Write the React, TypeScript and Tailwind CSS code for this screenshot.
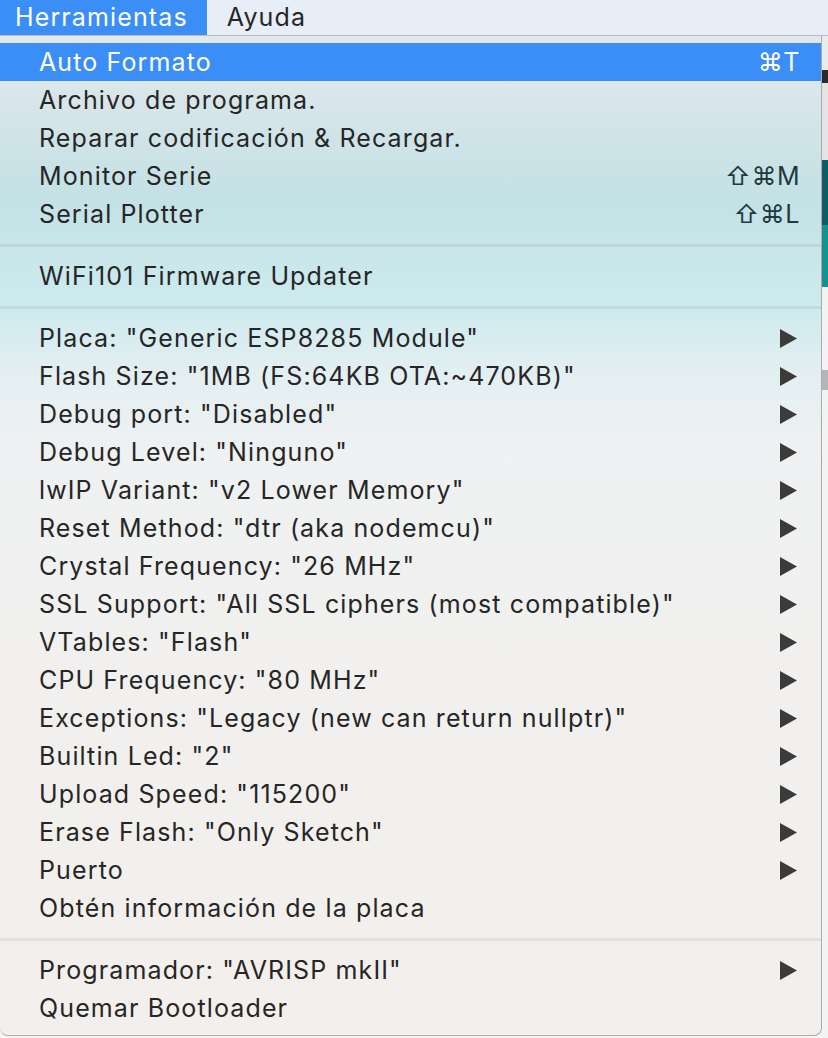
import { ReactNode } from "react"

type Item =
  | { kind: "item"; label: string; shortcut?: string; submenu?: boolean; active?: boolean }
  | { kind: "sep" }

const items: Item[] = [
  { kind: "item", label: "Auto Formato", shortcut: "⌘T", active: true },
  { kind: "item", label: "Archivo de programa." },
  { kind: "item", label: "Reparar codificación & Recargar." },
  { kind: "item", label: "Monitor Serie", shortcut: "⇧⌘M" },
  { kind: "item", label: "Serial Plotter", shortcut: "⇧⌘L" },
  { kind: "sep" },
  { kind: "item", label: "WiFi101 Firmware Updater" },
  { kind: "sep" },
  { kind: "item", label: 'Placa: "Generic ESP8285 Module"', submenu: true },
  { kind: "item", label: 'Flash Size: "1MB (FS:64KB OTA:~470KB)"', submenu: true },
  { kind: "item", label: 'Debug port: "Disabled"', submenu: true },
  { kind: "item", label: 'Debug Level: "Ninguno"', submenu: true },
  { kind: "item", label: 'lwIP Variant: "v2 Lower Memory"', submenu: true },
  { kind: "item", label: 'Reset Method: "dtr (aka nodemcu)"', submenu: true },
  { kind: "item", label: 'Crystal Frequency: "26 MHz"', submenu: true },
  { kind: "item", label: 'SSL Support: "All SSL ciphers (most compatible)"', submenu: true },
  { kind: "item", label: 'VTables: "Flash"', submenu: true },
  { kind: "item", label: 'CPU Frequency: "80 MHz"', submenu: true },
  { kind: "item", label: 'Exceptions: "Legacy (new can return nullptr)"', submenu: true },
  { kind: "item", label: 'Builtin Led: "2"', submenu: true },
  { kind: "item", label: 'Upload Speed: "115200"', submenu: true },
  { kind: "item", label: 'Erase Flash: "Only Sketch"', submenu: true },
  { kind: "item", label: "Puerto", submenu: true },
  { kind: "item", label: "Obtén información de la placa" },
  { kind: "sep" },
  { kind: "item", label: 'Programador: "AVRISP mkII"', submenu: true },
  { kind: "item", label: "Quemar Bootloader" },
]

function Arrow() {
  return (
    <svg width="17" height="19" viewBox="0 0 17 19" className="mr-[3px]">
      <path d="M0 0 L17 9.5 L0 19 Z" fill="#3b3b3b" />
    </svg>
  )
}

function Row({ label, right, active }: { label: string; right?: ReactNode; active?: boolean }) {
  return (
    <div
      className={
        "flex h-[38px] items-center justify-between pl-[39px] pr-[21px] " +
        (active ? "bg-[#3a8ef6] text-white" : "text-[#262626]")
      }
    >
      <span>{label}</span>
      {right}
    </div>
  )
}

export default function App() {
  return (
    <div className="relative h-[1038px] w-[828px] overflow-hidden bg-[#f4f4f4] font-['Inter','DejaVu_Sans',sans-serif] text-[25px] leading-none tracking-[0.045em]">
      {/* menu bar */}
      <div className="flex h-[36px] items-stretch border-b border-[#b9bdc3] bg-[#e7eef8]">
        <div className="flex items-center bg-[#3a8ef6] pl-[15px] pr-[19px] text-white">Herramientas</div>
        <div className="flex items-center px-[20px] text-[#262626]">Ayuda</div>
      </div>

      <div className="flex">
        {/* menu panel */}
        <div className="flex h-[1000px] w-[822px] flex-col rounded-b-[8px] border-r border-b border-[#a9abad] bg-[linear-gradient(to_bottom,#e3e8ec_0%,#d8e6ea_6%,#c4e1e5_16%,#cdeaee_27%,#e4eff2_34%,#eff1f2_42%,#f2f0ee_70%,#f2efec_100%)] pt-[7px]">
          {items.map((it, i) =>
            it.kind === "sep" ? (
              <div key={i} className="flex h-[24px] items-center">
                <div className="h-[3px] w-full bg-black/[0.06]" />
              </div>
            ) : (
              <Row
                key={i}
                label={it.label}
                active={it.active}
                right={
                  it.shortcut ? (
                    <span className={"tracking-[0.02em] " + (it.active ? "text-white" : "text-[#1e3a3f]")}>
                      {it.shortcut}
                    </span>
                  ) : it.submenu ? (
                    <Arrow />
                  ) : undefined
                }
              />
            )
          )}
        </div>

        {/* sliver of the window behind */}
        <div className="flex w-[6px] flex-col">
          <div className="h-[34px] bg-[#e9ecef]" />
          <div className="h-[13px] bg-[#2a2a2a]" />
          <div className="h-[77px] bg-[#e4e4e4]" />
          <div className="h-[65px] bg-[#0f5d62]" />
          <div className="h-[62px] bg-[#17918f]" />
          <div className="h-[83px] bg-[#f3f3f3]" />
          <div className="h-[20px] bg-[#b5b5b5]" />
          <div className="flex-1 bg-[#f3f3f3]" />
        </div>
      </div>
    </div>
  )
}
